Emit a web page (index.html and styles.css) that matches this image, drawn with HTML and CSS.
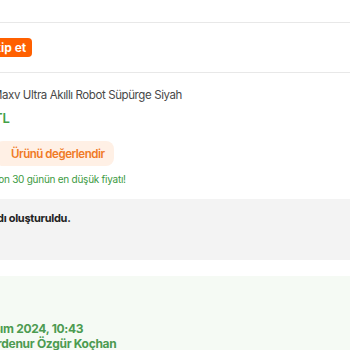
FILE: index.html
```html
<!DOCTYPE html>
<html lang="tr">
<head>
    <meta charset="UTF-8">
    <meta name="viewport" content="width=device-width, initial-scale=1.0">
    <title>Sipariş Detayı</title>
    <link rel="stylesheet" href="styles.css">
</head>
<body>

<div class="page">
    <div class="top"></div>

    <div class="actions">
        <button class="track-btn">Takip et</button>
    </div>

    <div class="product">
        <p class="product-name">Maxv Ultra Akıllı Robot Süpürge Siyah</p>
        <p class="price">TL</p>
        <button class="review-btn">Ürünü değerlendir</button>
        <p class="lowest">Son 30 günün en düşük fiyatı!</p>
    </div>

    <div class="status">
        <p class="status-text">Kargo kaydı oluşturuldu.</p>
    </div>

    <div class="delivery">
        <p class="delivery-date">12 Kasım 2024, 10:43</p>
        <p class="delivery-name">Nurdenur Özgür Koçhan</p>
    </div>
</div>

</body>
</html>
```

FILE: styles.css
```css
body {
    margin: 0;
    font-family: Inter, "Noto Sans", sans-serif;
    background-color: #fff;
    overflow: hidden;
}
.page {
    margin-left: -8px;
}
.top {
    height: 22px;
    border-bottom: 1px solid #e8e8e8;
}
.actions {
    height: 49px;
    display: flex;
    align-items: center;
    border-bottom: 1px solid #e8e8e8;
}
.track-btn {
    margin-left: -22px;
    height: 19px;
    padding: 0 6px 0 10px;
    background-color: #ff6000;
    color: white;
    border: none;
    border-radius: 4px;
    font-family: inherit;
    font-size: 12px;
    font-weight: 700;
}
.product {
    padding-top: 13px;
}
.product p {
    margin: 0;
}
.product-name {
    font-size: 11.5px;
    letter-spacing: -0.4px;
    line-height: 18px;
    color: #484848;
}
.price {
    margin-top: 5px !important;
    margin-left: 2px !important;
    font-size: 13px;
    line-height: 18px;
    font-weight: 600;
    color: #43a047;
}
.review-btn {
    margin: 14px 0 0 3px;
    height: 25px;
    padding: 0 9px 0 16px;
    background-color: #fff0e5;
    color: #f07a26;
    border: none;
    border-radius: 8px;
    font-family: inherit;
    font-size: 11.5px;
    letter-spacing: -0.45px;
    font-weight: 600;
}
.lowest {
    margin-top: 6px !important;
    font-size: 10px;
    letter-spacing: -0.25px;
    line-height: 14px;
    color: #3c9a42;
}
.status {
    margin-top: 13px;
    height: 61px;
    background-color: #f3f3f3;
    padding-top: 12px;
    box-sizing: border-box;
}
.status-text {
    margin: 0 0 0 -46px;
    font-size: 11px;
    letter-spacing: -0.3px;
    line-height: 14px;
    font-weight: 700;
    color: #222;
}
.delivery {
    margin-top: 16px;
    height: 80px;
    background-color: #f5faf4;
    padding-top: 45px;
    box-sizing: border-box;
}
.delivery p {
    margin: 0;
    font-size: 12px;
    letter-spacing: -0.3px;
    line-height: 15px;
    font-weight: 700;
    color: #4c9b50;
}
.delivery-date {
    margin-left: -28px !important;
}
.delivery-name {
    margin-left: -11px !important;
}
```
